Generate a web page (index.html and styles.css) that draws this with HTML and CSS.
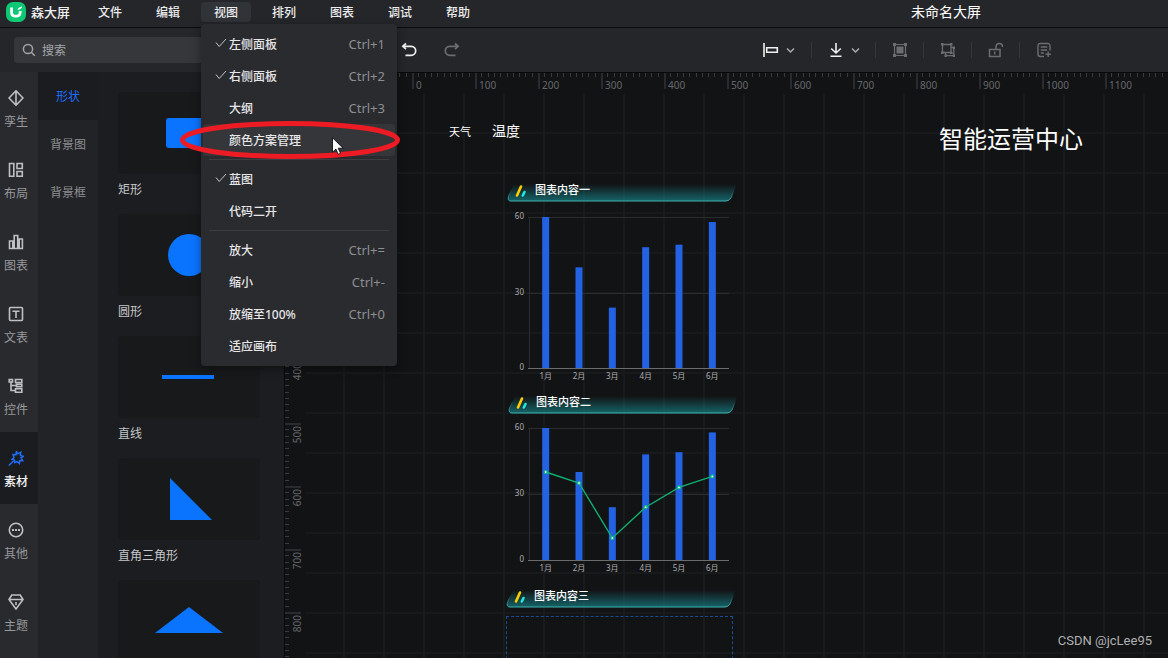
FILE: index.html
```html
<!DOCTYPE html>
<html lang="zh-CN">
<head>
<meta charset="utf-8">
<meta name="viewport" content="width=device-width, initial-scale=1">
<title>森大屏 - 未命名大屏</title>
<link rel="stylesheet" href="styles.css">
</head>
<body>
<header class="topbar">
  <a class="brand" href="#">
    <svg class="brand-logo" viewBox="0 0 20 20" aria-hidden="true">
      <rect width="20" height="20" rx="7" fill="#0cc774"/>
      <path d="M5.600 5.600v4.600q0 4 4.200 4t4.400-4V9" fill="none" stroke="#fff" stroke-width="2.800"/>
      <path d="M11.600 8.200q.2-3 4.600-3.600-.6 2.800-4.600 3.600z" fill="#fff"/>
    </svg>
    <span>森大屏</span>
  </a>
  <nav class="menubar" aria-label="主菜单">
    <button class="menubar-item">文件</button>
    <button class="menubar-item">编辑</button>
    <div class="menu-host">
      <button class="menubar-item is-open" aria-expanded="true">视图</button>
      <div class="menu" role="menu">
        <button class="menu-item is-checked" role="menuitem"><svg class="tick" viewBox="0 0 12 10"><path d="M1 4.500l3.200 4L11 1"/></svg><span>左侧面板</span><kbd>Ctrl+1</kbd></button>
        <button class="menu-item is-checked" role="menuitem"><svg class="tick" viewBox="0 0 12 10"><path d="M1 4.500l3.200 4L11 1"/></svg><span>右侧面板</span><kbd>Ctrl+2</kbd></button>
        <button class="menu-item" role="menuitem"><span>大纲</span><kbd>Ctrl+3</kbd></button>
        <button class="menu-item is-hovered" role="menuitem"><span>颜色方案管理</span></button>
        <hr class="menu-rule">
        <button class="menu-item is-checked" role="menuitem"><svg class="tick" viewBox="0 0 12 10"><path d="M1 4.500l3.200 4L11 1"/></svg><span>蓝图</span></button>
        <button class="menu-item" role="menuitem"><span>代码二开</span></button>
        <hr class="menu-rule">
        <button class="menu-item" role="menuitem"><span>放大</span><kbd>Ctrl+=</kbd></button>
        <button class="menu-item" role="menuitem"><span>缩小</span><kbd>Ctrl+-</kbd></button>
        <button class="menu-item" role="menuitem"><span>放缩至100%</span><kbd>Ctrl+0</kbd></button>
        <button class="menu-item" role="menuitem"><span>适应画布</span></button>
        <svg class="highlight" viewBox="0 0 222 40" aria-hidden="true"><ellipse cx="111" cy="20" rx="107.500" ry="16.500" fill="none" stroke="#ed1c24" stroke-width="5"/></svg>
        <svg class="cursor" viewBox="0 0 12 18" aria-hidden="true"><path d="M.5.800v14.400l3.400-3.200 2.300 5.300 2.300-1-2.300-5.100h4.900z" fill="#fff" stroke="#000" stroke-width=".8"/></svg>
      </div>
    </div>
    <button class="menubar-item">排列</button>
    <button class="menubar-item">图表</button>
    <button class="menubar-item">调试</button>
    <button class="menubar-item">帮助</button>
  </nav>
  <h1 class="doc-title">未命名大屏</h1>
</header>

<div class="toolbar">
  <label class="search">
    <svg viewBox="0 0 14 14" aria-hidden="true"><circle cx="6" cy="6" r="4.600"/><path d="M9.300 9.300l3.500 3.500"/></svg>
    <input type="search" placeholder="搜索" aria-label="搜索">
  </label>
  <div class="history">
    <button class="tool is-lit" aria-label="撤销"><svg viewBox="0 0 16 16"><path d="M5 1.500L1.800 4.300 5 7.200M2 4.300h8.200a4.500 4.500 0 0 1 0 9H4.500" stroke-width="1.700"/></svg></button>
    <button class="tool" aria-label="重做"><svg viewBox="0 0 16 16"><path d="M11 1.500l3.200 2.800L11 7.200M14 4.300H5.800a4.500 4.500 0 0 0 0 9h5.700" stroke-width="1.700"/></svg></button>
  </div>
  <div class="tools">
    <button class="tool is-lit with-caret" aria-label="对齐"><svg viewBox="0 0 16 16"><path d="M1 1v14M3.700 5.800h10.600v4.500H3.700z" stroke-width="1.600"/></svg><svg class="caret" viewBox="0 0 9 9"><path d="M1 2.500l3.500 3.500L8 2.500"/></svg></button>
    <button class="tool is-lit with-caret divided" aria-label="置底"><svg viewBox="0 0 16 16"><path d="M8 1v9.500M3.200 6.500L8 11l4.800-4.500M2.500 14.200h11" stroke-width="1.600"/></svg><svg class="caret" viewBox="0 0 9 9"><path d="M1 2.500l3.500 3.500L8 2.500"/></svg></button>
    <button class="tool divided" aria-label="成组"><svg viewBox="0 0 16 16"><path d="M2.500 3v10M13.500 3v10M3 2.500h10M3 13.500h10" stroke-width="1.200"/><path d="M1 1h3v3H1zM12 1h3v3h-3zM1 12h3v3H1zM12 12h3v3h-3zM4.500 4.500h7v7h-7z" fill="currentColor" stroke="none"/></svg></button>
    <button class="tool divided" aria-label="解组"><svg viewBox="0 0 16 16"><path d="M2.500 2.500h8.500v8h-8.500zM11 5.500h2.800v8.200H5.500V10.500" stroke-width="1.300"/><path d="M1 1h2.500v2.500H1zM10 1h2.500v2.500H10zM1 9.500h2.500V12H1zM10 9.500h2.500V12H10zM12.800 4.500H15V7h-2.200zM12.800 12.500H15V15h-2.200zM4.500 12.500h2.300V15H4.500z" fill="currentColor" stroke="none"/></svg></button>
    <button class="tool divided" aria-label="解锁"><svg viewBox="0 0 16 16"><path d="M1.500 7.500h10.500v7H1.500zM8 7.500V5q0-3.500 3.300-3.500T14.500 5M6.700 9.500v3" stroke-width="1.500"/></svg></button>
    <button class="tool divided" aria-label="备注"><svg viewBox="0 0 16 16"><path d="M14 8.500V4q0-2.500-2.500-2.500h-7Q2 1.500 2 4v8q0 2.500 2.500 2.500H8M4.800 5h6.400M4.800 8h6.400M4.800 11h3M12.200 9.500v5.500M9.500 12.300H15" stroke-width="1.400"/></svg></button>
  </div>
</div>

<div class="workspace">
  <nav class="rail" aria-label="组件分类">
    <button class="rail-item"><svg viewBox="0 0 16 16"><path d="M8 .800L15 8 8 15.200 1 8zM8 1v14"/></svg><span>孪生</span></button>
    <button class="rail-item"><svg viewBox="0 0 16 16"><path d="M1.500 1.500h4.300v12.800H1.500zM9 1.500h5.300v5H9zM9 9.500h5.300v4.800H9z"/></svg><span>布局</span></button>
    <button class="rail-item"><svg viewBox="0 0 16 16"><path d="M1.500 7h3.300v7.500H1.500zM6.200 1.500h3.500v13H6.200zM11.200 5h3.200v9.500h-3.200z"/></svg><span>图表</span></button>
    <button class="rail-item"><svg viewBox="0 0 16 16"><rect x="1.500" y="1.500" width="13" height="13" rx="1"/><path d="M4.500 5.200h7M8 5.200V12"/></svg><span>文表</span></button>
    <button class="rail-item"><svg viewBox="0 0 16 16"><path d="M1.200 1.500h3.300v2.500H1.200zM7.500 1.500h6.300v3H7.500zM7.500 10.800h6.300v3.500H7.500zM8.500 6.300h5.300v2.300H8.500zM3 4v8.500h4.500M3 7.500h5.500"/></svg><span>控件</span></button>
    <button class="rail-item is-active"><svg viewBox="0 0 16 16"><path d="M8.300 1l1.200 2.800 3.300-1.600-.5 3.300 3 .8-2.300 1.500 1.800 3-3.200-.3-.2 3-2.500-2-2.200 1.200-.2-2.700-2.500-.8 2-1.700-1-3 3 .2zM5.500 11L.8 15.500"/></svg><span>素材</span></button>
    <button class="rail-item"><svg viewBox="0 0 16 16"><circle cx="8" cy="8" r="6.700"/><path d="M4 8h2M7 8h2M10 8h2" stroke-width="1.800"/></svg><span>其他</span></button>
    <button class="rail-item"><svg viewBox="0 0 16 16"><path d="M3.800 1h8.400L15 5.500 8 15 1 5.500zM1.500 5.500h13M8 8v3"/></svg><span>主题</span></button>
  </nav>
  <nav class="kinds" aria-label="素材类型">
    <button class="kind is-active">形状</button>
    <button class="kind">背景图</button>
    <button class="kind">背景框</button>
  </nav>
  <section class="shapes" aria-label="形状">
    <figure class="shape"><div class="shape-card"><svg viewBox="0 0 142 82"><rect x="48" y="26" width="46" height="30" rx="3"/></svg></div><figcaption>矩形</figcaption></figure>
    <figure class="shape"><div class="shape-card"><svg viewBox="0 0 142 82"><circle cx="71" cy="41" r="21"/></svg></div><figcaption>圆形</figcaption></figure>
    <figure class="shape"><div class="shape-card"><svg viewBox="0 0 142 82"><rect x="44" y="39" width="52" height="4"/></svg></div><figcaption>直线</figcaption></figure>
    <figure class="shape"><div class="shape-card"><svg viewBox="0 0 142 82"><path d="M52 20v42h42z"/></svg></div><figcaption>直角三角形</figcaption></figure>
    <figure class="shape"><div class="shape-card"><svg viewBox="0 0 142 82"><path d="M71 27L105 53H37z"/></svg></div></figure>
  </section>

  <main class="stage" id="stage">
    <div class="grid"></div>
    <svg class="ruler ruler-x" id="ruler-x"></svg>
    <svg class="ruler ruler-y" id="ruler-y"></svg>

    <p class="node weather">天气</p>
    <p class="node temperature">温度</p>
    <h2 class="node screen-title">智能运营中心</h2>

    <h3 class="node banner banner-1"><svg viewBox="0 0 230 20" aria-hidden="true"><use href="#banner-shape"/></svg><span>图表内容一</span></h3>
    <svg class="node chart chart-1" id="chart-1" role="img" aria-label="图表内容一"></svg>
    <h3 class="node banner banner-2"><svg viewBox="0 0 230 20" aria-hidden="true"><use href="#banner-shape"/></svg><span>图表内容二</span></h3>
    <svg class="node chart chart-2" id="chart-2" role="img" aria-label="图表内容二"></svg>
    <h3 class="node banner banner-3"><svg viewBox="0 0 230 20" aria-hidden="true"><use href="#banner-shape"/></svg><span>图表内容三</span></h3>
    <div class="node empty-slot"></div>
    <p class="credit">CSDN @jcLee95</p>
  </main>
</div>

<svg class="defs" aria-hidden="true">
  <defs>
    <linearGradient id="banner-fill" x1="0" y1="0" x2="0" y2="1">
      <stop offset="0" stop-color="#16777c" stop-opacity="0"/>
      <stop offset="1" stop-color="#16777c" stop-opacity=".8"/>
    </linearGradient>
    <linearGradient id="banner-edge" x1="0" y1="0" x2="0" y2="1">
      <stop offset=".3" stop-color="#35a9a9" stop-opacity="0"/>
      <stop offset="1" stop-color="#3fb4b4"/>
    </linearGradient>
    <g id="banner-shape">
      <path d="M7 1L1.500 13Q0 18 4 18H219Q222 18 224 15L229.500 1z" fill="url(#banner-fill)"/>
      <path d="M7 1L1.500 13Q0 18 4 18H219Q222 18 224 15L229.500 1" fill="none" stroke="url(#banner-edge)"/>
      <path d="M10 12.500l4-9" stroke="#fc0" stroke-width="2.600" stroke-linecap="round"/>
      <path d="M15.800 12.500l1.700-3.500" stroke="#1fe8dc" stroke-width="2.600" stroke-linecap="round"/>
    </g>
  </defs>
</svg>
<script src="app.js"></script>
</body>
</html>
```
FILE: styles.css
```css
* { box-sizing: border-box; }

body {
  margin: 0;
  height: 100vh;
  display: flex;
  flex-direction: column;
  overflow: hidden;
  background: #121315;
  color: #dcdddf;
  font: 12px/16px "Noto Sans", "Noto Sans CJK SC", sans-serif;
}

button {
  border: 0;
  padding: 0;
  background: none;
  color: inherit;
  font: inherit;
}

h1, h2, h3, p, figure { margin: 0; font-weight: 400; }

svg { display: block; }

.defs { position: absolute; width: 0; height: 0; }

/* Top bar */
.topbar {
  display: flex;
  align-items: center;
  height: 28px;
  padding-bottom: 3px;
  background: #25262a;
  border-bottom: 1px solid #0b0b0d;
}

.brand {
  display: flex;
  align-items: center;
  gap: 5px;
  width: 85px;
  padding-left: 6px;
  color: #f0f0f1;
  font-size: 13px;
  font-weight: 500;
  text-decoration: none;
}

.brand-logo { width: 20px; height: 20px; }

.menubar { display: flex; gap: 8px; }

.menubar-item {
  width: 50px;
  height: 20px;
  padding-top: 2px;
  border-radius: 4px;
  color: #ececed;
  font-weight: 500;
}

.menubar-item.is-open { background: #303338; }

.menu-host { position: relative; height: 20px; }

.doc-title {
  margin-left: auto;
  padding-right: 187px;
  color: #fff;
  font-size: 14px;
  line-height: 20px;
}

/* View menu */
.menu {
  position: absolute;
  z-index: 5;
  top: 22px;
  left: 0;
  width: 196px;
  padding: 4px 2px;
  border-radius: 4px;
  background: #2a2b2f;
  box-shadow: 0 3px 10px rgba(0, 0, 0, .4);
}

.menu-item {
  position: relative;
  display: flex;
  align-items: center;
  justify-content: space-between;
  width: 100%;
  height: 32px;
  padding: 0 10px 0 26px;
  border-radius: 4px;
  color: #e6e6e8;
  font-weight: 500;
}

.menu-item span { padding-top: 2px; }

.menu-item.is-hovered { background: #35363a; }

.menu-item kbd {
  color: #8d8e91;
  font: 13px/16px "Noto Sans", sans-serif;
}

.tick {
  position: absolute;
  left: 12px;
  top: 10px;
  width: 12px;
  height: 10px;
  fill: none;
  stroke: #c3c4c6;
}

.menu-rule {
  height: 1px;
  margin: 3px 6px;
  border: 0;
  background: #3d3e42;
}

.highlight {
  position: absolute;
  top: 96px;
  left: -22px;
  width: 222px;
  height: 40px;
  pointer-events: none;
}

.cursor {
  position: absolute;
  top: 113px;
  left: 131px;
  width: 12px;
  height: 18px;
}

/* Toolbar */
.toolbar {
  display: flex;
  align-items: center;
  height: 44px;
  flex: none;
  padding: 0 101px 0 14px;
  background: #25262a;
}

.search {
  display: flex;
  align-items: center;
  gap: 6px;
  width: 256px;
  height: 26px;
  padding: 0 8px;
  border-radius: 4px;
  background: #36373b;
}

.search svg {
  flex: none;
  width: 14px;
  height: 14px;
  fill: none;
  stroke: #a3a4a7;
  stroke-width: 1.5;
}

.search input {
  width: 100%;
  border: 0;
  outline: 0;
  padding: 2px 0 0;
  background: none;
  color: #dcdddf;
  font: inherit;
}

.search input::placeholder { color: #a6a7aa; opacity: 1; }

.history {
  display: flex;
  gap: 27px;
  margin-left: 131px;
}

.tools { display: flex; margin-left: auto; }

.tool { color: #6c6d71; }

.tool svg {
  width: 16px;
  height: 16px;
  fill: none;
  stroke: currentColor;
}

.tool.is-lit { color: #f0f0f1; }

.tools .tool {
  display: flex;
  align-items: center;
  gap: 7px;
  padding: 0 16px;
}

.tools .tool.divided {
  padding-right: 15px;
  border-left: 1px solid #36373b;
}

.tool .caret {
  width: 9px;
  height: 9px;
  color: #aaabae;
  stroke-width: 1.5;
}

/* Left panels */
.workspace { display: flex; flex: 1; min-height: 0; }

.rail { flex: none; width: 38px; background: #292a2e; }

.rail-item {
  display: flex;
  flex-direction: column;
  align-items: center;
  gap: 8px;
  width: 100%;
  height: 72px;
  padding: 18px 6px 0 0;
  color: #98999c;
}

.rail-item svg {
  flex: none;
  width: 16px;
  height: 16px;
  fill: none;
  stroke: #bfc0c2;
  stroke-width: 1.6;
}

.rail-item.is-active { background: #1b1c1f; color: #f4f4f5; font-weight: 500; }
.rail-item.is-active svg { stroke: #1e6fff; stroke-width: 1.4; }

.kinds { flex: none; width: 60px; background: #222327; }

.kind { display: block; width: 100%; height: 48px; padding-top: 2px; color: #8d8e91; }
.kind.is-active { background: #1b1c1f; color: #1e6fff; }

.shapes {
  flex: none;
  width: 186px;
  padding: 20px 24px 0 20px;
  overflow: hidden;
  background: #1c1d20;
}

.shape { height: 122px; color: #c6c7c9; }
.shape-card { border-radius: 4px; background: #18191b; }
.shape-card svg { width: 100%; height: 82px; fill: #0b74ff; }
.shape figcaption { padding-top: 8px; }

/* Design canvas */
.stage {
  position: relative;
  flex: 1;
  overflow: hidden;
  border-top: 1px solid #08090a;
  border-left: 1px solid #08090a;
}

.grid {
  position: absolute;
  inset: 21px 0 0 21px;
  background-image:
    linear-gradient(90deg, #191a1c 2px, transparent 2px),
    linear-gradient(#191a1c 2px, transparent 2px);
  background-size: 40px 40px;
  background-position: 37px 0, 0 38px;
}

.ruler {
  position: absolute;
  top: 0;
  left: 0;
  fill: #67686b;
  font-size: 10px;
}

.ruler-x { width: 100%; height: 21px; }
.ruler-y { width: 21px; height: 100%; }

.tick-minor { fill: #3a3b3e; }
.tick-major { fill: #2a2b2e; }

.node { position: absolute; color: #fff; white-space: nowrap; }

.weather { left: 164px; top: 51px; font-size: 11px; }
.temperature { left: 207px; top: 48px; font-size: 14px; line-height: 20px; }
.screen-title { left: 654px; top: 48px; font-size: 24px; line-height: 36px; }

.banner {
  width: 230px;
  height: 20px;
  padding-left: 28px;
  font-size: 11px;
  font-weight: 500;
  line-height: 14px;
}

.banner svg { position: absolute; inset: 0; width: 230px; height: 20px; }
.banner span { position: relative; }

.banner-1 { left: 222px; top: 110px; }
.banner-2 { left: 223px; top: 322px; }
.banner-3 { left: 221px; top: 516px; }

.chart { width: 230px; fill: #acadaf; font-size: 8px; }
.chart-1 { left: 223px; top: 135px; height: 176px; }
.chart-2 { left: 223px; top: 346px; height: 157px; }

.bar { fill: #2462e4; }
.gridline { fill: #2b2c2e; }
.baseline { fill: #6b6c6e; }
.trend { fill: none; stroke: #10b070; stroke-width: 1.4; }
.trend-dot { fill: #d8fff0; stroke: #10b981; stroke-width: 1.2; }

.empty-slot {
  left: 221px;
  top: 543px;
  width: 227px;
  height: 160px;
  border: 1px dashed #174f96;
}

.credit {
  position: absolute;
  right: 16px;
  bottom: 9px;
  color: #b0b1b2;
  font: 13px/16px Roboto, sans-serif;
}
```
FILE: app.js
```js
const NS = "http://www.w3.org/2000/svg";

function add(parent, name, attrs, text) {
  const el = document.createElementNS(NS, name);
  for (const key in attrs) el.setAttribute(key, attrs[key]);
  if (text !== undefined) el.textContent = text;
  parent.appendChild(el);
  return el;
}

// 100 canvas units take 63 screen pixels at the current zoom.
const STEP = 63;

function drawRulerX(svg, origin, length) {
  svg.replaceChildren();
  for (let i = -20; origin + i * STEP / 10 < length; i++) {
    const x = Math.round(origin + i * STEP / 10);
    const major = i % 10 === 0;
    add(svg, "rect", { x: x, y: 0, width: major ? 2 : 1, height: major ? 16 : 4, class: major ? "tick-major" : "tick-minor" });
    if (major && i >= 0 && x + 30 < length) add(svg, "text", { x: x + 4, y: 16 }, i * 10);
  }
}

function drawRulerY(svg, origin, length) {
  svg.replaceChildren();
  for (let i = 0; origin + i * STEP / 10 < length; i++) {
    const y = Math.round(origin + i * STEP / 10);
    const major = i % 10 === 0;
    add(svg, "rect", { x: 0, y: y, width: major ? 16 : 4, height: major ? 2 : 1, class: major ? "tick-major" : "tick-minor" });
    if (major && y + 24 < length) add(svg, "text", { transform: `translate(16 ${y + 3}) rotate(-90)`, "text-anchor": "end" }, i * 10);
  }
}

function drawRulers() {
  const stage = document.getElementById("stage");
  drawRulerX(document.getElementById("ruler-x"), 127, stage.clientWidth);
  drawRulerY(document.getElementById("ruler-y"), 35, stage.clientHeight);
}

function drawChart(svg, height, bars, trend) {
  const top = 9, left = 21, width = 200, slot = width / bars.length;
  const yOf = v => top + height - v * height / 60;
  const xOf = i => left + slot * (i + .5);
  add(svg, "rect", { x: left, y: top, width: 1, height: height, class: "gridline" });
  [60, 30, 0].forEach(v => {
    const y = Math.round(yOf(v));
    add(svg, "rect", { x: left - 1, y: y, width: width + 1, height: 1, class: v ? "gridline" : "baseline" });
    add(svg, "text", { x: 16, y: y + 2, "text-anchor": "end" }, v);
  });
  bars.forEach((v, i) => {
    add(svg, "rect", { x: xOf(i) - 3.5, y: yOf(v), width: 7, height: v * height / 60, class: "bar" });
    add(svg, "text", { x: xOf(i), y: top + height + 11, "text-anchor": "middle" }, (i + 1) + "月");
  });
  if (!trend) return;
  add(svg, "polyline", { points: trend.map((v, i) => xOf(i) + "," + yOf(v)).join(" "), class: "trend" });
  trend.forEach((v, i) => add(svg, "circle", { cx: xOf(i), cy: yOf(v), r: 1.5, class: "trend-dot" }));
}

drawRulers();
window.addEventListener("resize", drawRulers);
drawChart(document.getElementById("chart-1"), 151, [60, 40, 24, 48, 49, 58]);
drawChart(document.getElementById("chart-2"), 132, [60, 40, 24, 48, 49, 58], [40, 35, 10, 24, 33, 38]);
```
